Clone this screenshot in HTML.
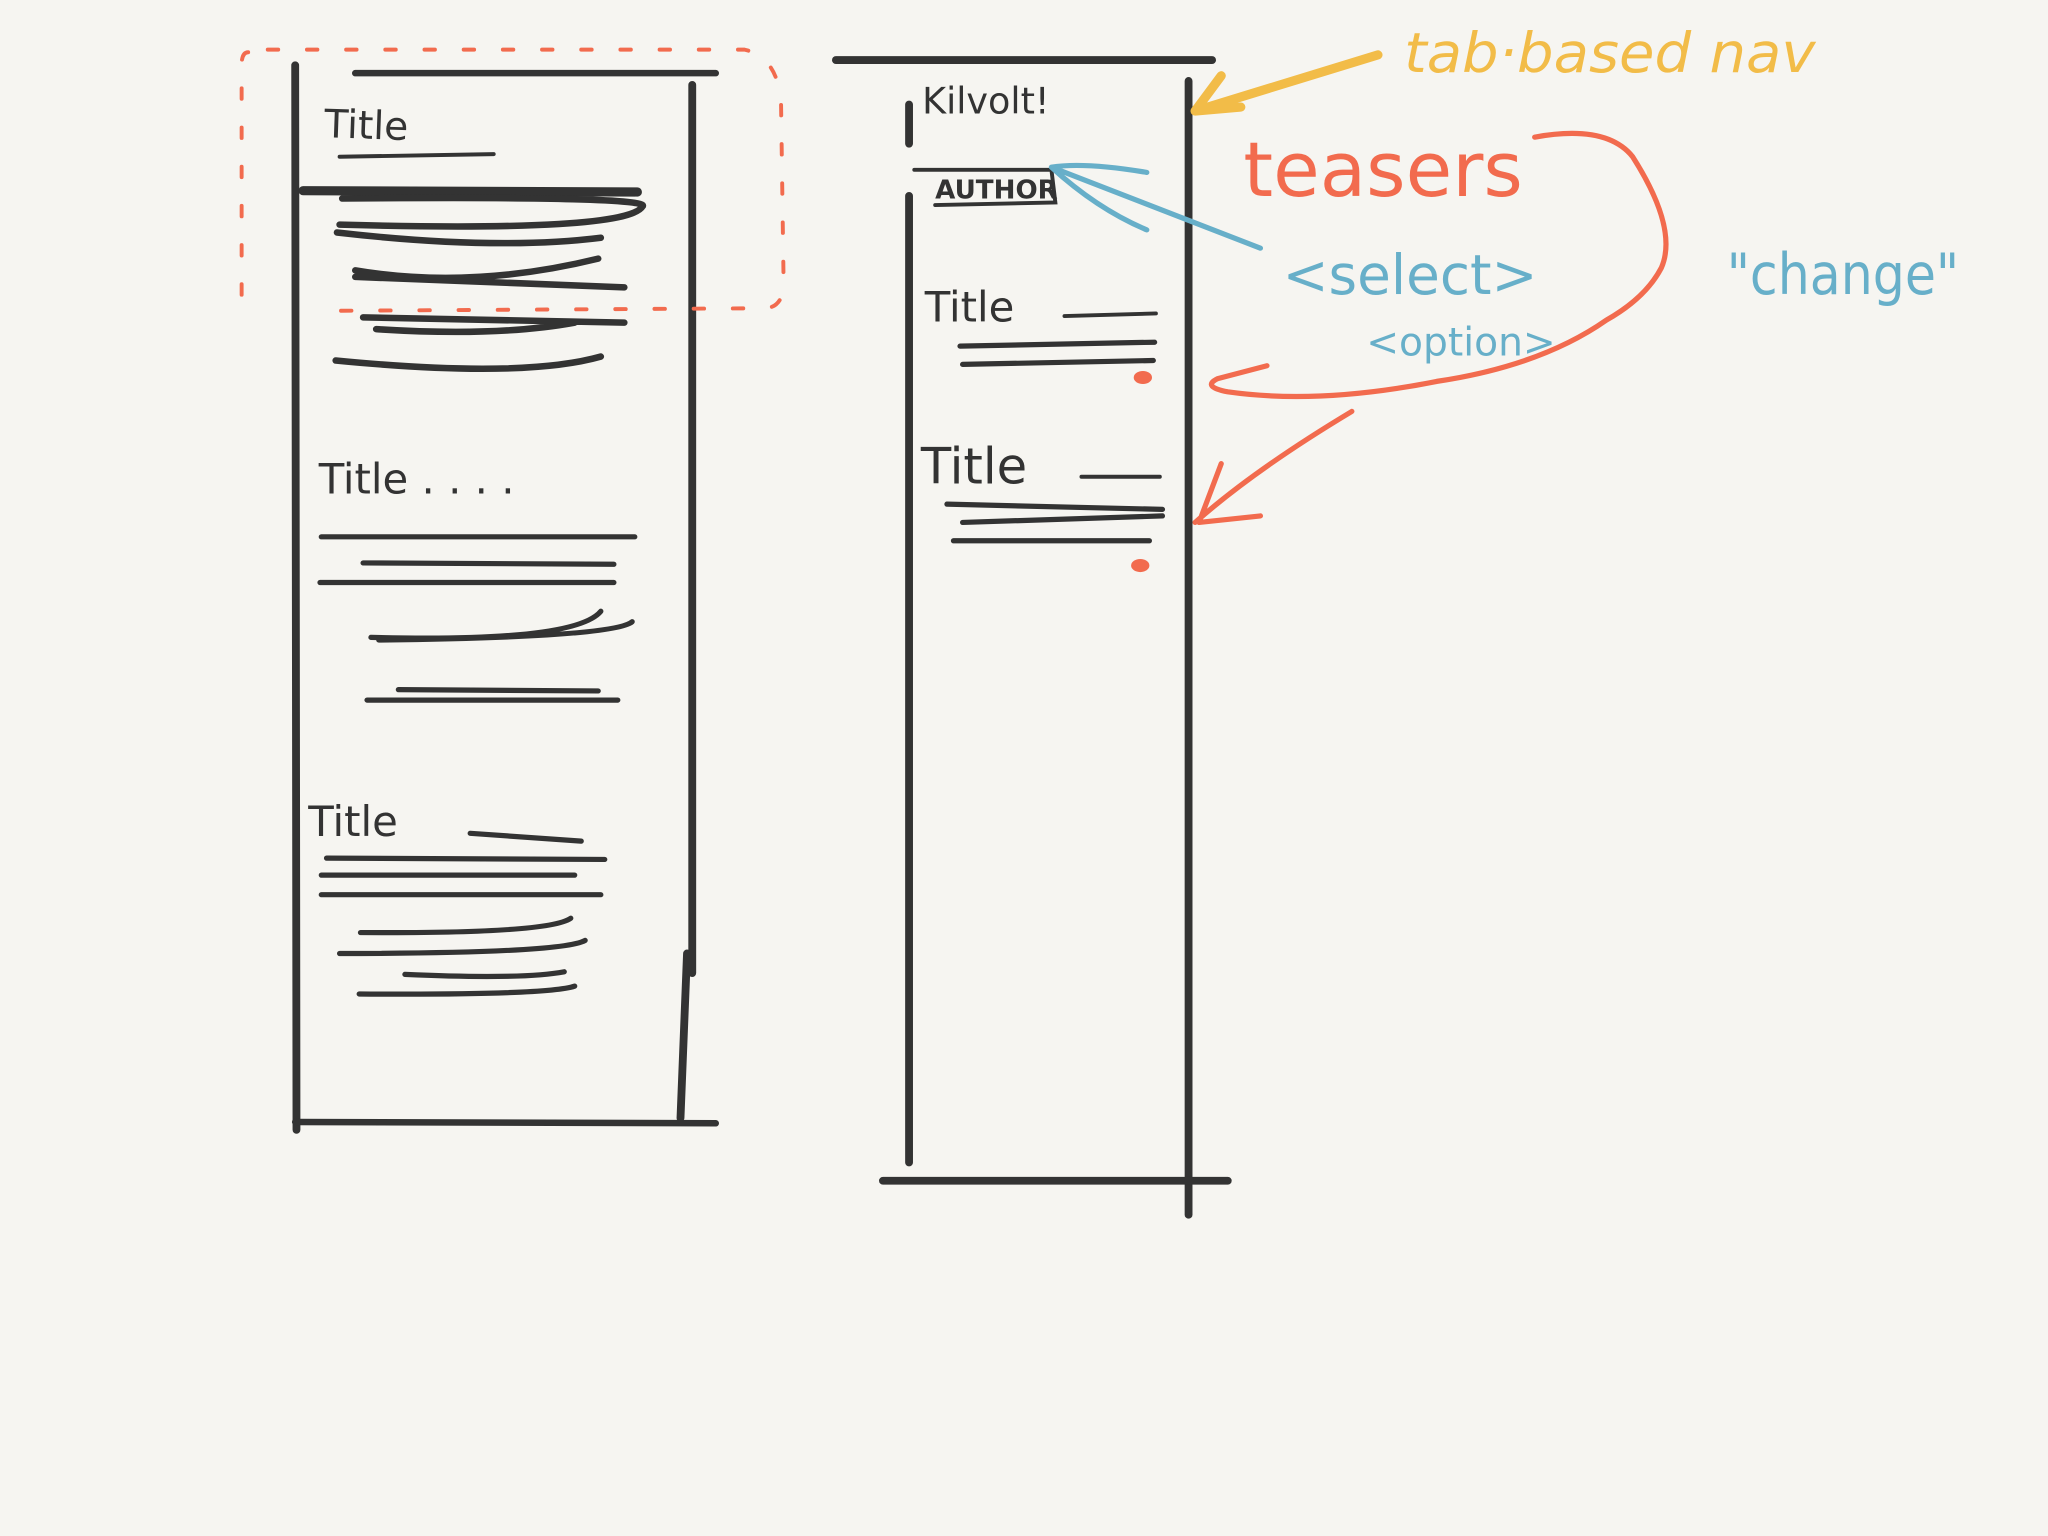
<!DOCTYPE html>
<html><head><meta charset="utf-8"><style>
html,body{margin:0;padding:0;background:#f6f5f1;}
svg{display:block;}
text{font-family:"DejaVu Sans","Liberation Sans",sans-serif;}
</style></head><body>
<svg width="2048" height="1536" viewBox="0 0 1568 1176" xmlns="http://www.w3.org/2000/svg">
<rect width="1568" height="1176" fill="#f6f5f1"/>
<g fill="none" stroke="#333" stroke-linecap="round">
<path d="M226 50 L227 865" stroke-width="6"/>
<path d="M530 65 L530 745 M526 730 L521 856" stroke-width="6"/>
<path d="M272 56 L548 56" stroke-width="5"/>
<path d="M226 859 L548 860" stroke-width="5"/>
<path d="M260 120 L378 118" stroke-width="3"/>
<path d="M232 146 L488 147" stroke-width="7"/>
<path d="M262 152 Q500 150 492 158 Q480 178 260 172 M258 178 Q380 192 460 182" stroke-width="5"/>
<path d="M272 207 Q360 222 458 198 M272 212 L478 220" stroke-width="5"/>
<path d="M278 243 L478 247 M288 252 Q380 258 440 247" stroke-width="5"/>
<path d="M257 276 Q400 290 460 273" stroke-width="5"/>
<path d="M246 411 L486 411" stroke-width="4"/>
<path d="M278 431 L470 432" stroke-width="4"/>
<path d="M245 446 L470 446" stroke-width="4"/>
<path d="M284 488 Q440 492 460 468 M290 490 Q470 488 484 476" stroke-width="4"/>
<path d="M305 528 L458 529 M281 536 L473 536" stroke-width="4"/>
<path d="M360 638 L445 644" stroke-width="4"/>
<path d="M250 657 L463 658 M246 670 L440 670 M246 685 L460 685" stroke-width="4"/>
<path d="M276 714 Q420 715 437 703 M260 730 Q430 730 448 720" stroke-width="4"/>
<path d="M310 746 Q400 750 432 744 M275 761 Q420 762 440 755" stroke-width="4"/>
<path d="M640 46 L928 46" stroke-width="6"/>
<path d="M696 150 L696 890 M696 80 L696 110" stroke-width="6"/>
<path d="M910 62 L910 930" stroke-width="6"/>
<path d="M676 904 L940 904" stroke-width="6"/>
<path d="M700 130 L805 130 L808 155 L716 157" stroke-width="3"/>
<path d="M815 242 L885 240" stroke-width="3"/>
<path d="M735 265 L884 262 M737 279 L883 276" stroke-width="4"/>
<path d="M828 365 L888 365" stroke-width="3"/>
<path d="M725 386 L890 390 M737 400 L890 395 M730 414 L880 414" stroke-width="4"/>
</g>
<g fill="#333">
<text x="248" y="105" font-size="30" transform="rotate(2 248 105)">Title</text>
<text x="244" y="378" font-size="32">Title . . .  .</text>
<text x="236" y="640" font-size="32">Title</text>
<text x="706" y="87" font-size="28">Kilvolt!</text>
<text x="716" y="152" font-size="20" font-weight="bold">AUTHOR</text>
<text x="708" y="246" font-size="32">Title</text>
<text x="705" y="370" font-size="38">Title</text>
</g>
<ellipse cx="875" cy="289" rx="7" ry="5" fill="#f26b4e"/>
<ellipse cx="873" cy="433" rx="7" ry="5" fill="#f26b4e"/>
<path d="M190 40 Q185 40 185 50 L185 240 M205 38 L570 38 Q596 44 598 80 L600 220 Q598 236 585 236 L245 238" fill="none" stroke="#f26b4e" stroke-width="3" stroke-dasharray="8 22" stroke-linecap="round"/>
<g fill="none" stroke-linecap="round" stroke-linejoin="round">
<path d="M1055 42 L915 85 M935 58 L915 85 L950 82" stroke="#f2bc48" stroke-width="7"/>
<path d="M1175 105 Q1230 95 1250 120 Q1285 175 1272 205 Q1260 228 1230 245 Q1180 280 1100 292 Q1010 310 940 300 Q920 296 932 290 L970 280" stroke="#f26b4e" stroke-width="4"/>
<path d="M1035 315 Q960 360 915 400 M935 355 L918 400 L965 395" stroke="#f26b4e" stroke-width="4"/>
<path d="M965 190 L805 128 M878 132 Q830 124 805 128 Q840 160 878 176" stroke="#67afc9" stroke-width="4"/>
</g>
<text x="1075" y="55" font-size="42" fill="#f2bc48" font-style="italic" textLength="315" lengthAdjust="spacingAndGlyphs">tab·based nav</text>
<text x="952" y="150" font-size="58" fill="#f26b4e">teasers</text>
<text x="982" y="225" font-size="42" fill="#67afc9">&lt;select&gt;</text>
<text x="1046" y="272" font-size="30" fill="#67afc9">&lt;option&gt;</text>
<text x="1322" y="225" font-size="44" fill="#67afc9" textLength="178" lengthAdjust="spacingAndGlyphs">"change"</text>
</svg>
</body></html>
